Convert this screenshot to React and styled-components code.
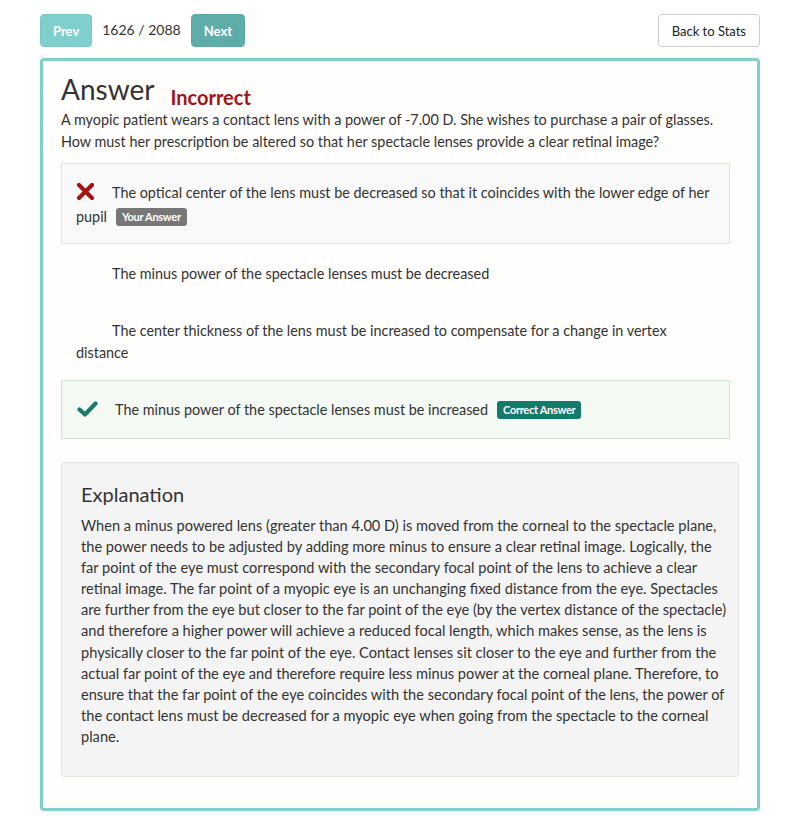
import React from 'react';
import styled, { createGlobalStyle } from 'styled-components';

const GlobalStyle = createGlobalStyle`
  body {
    margin: 0;
    background-color: #fff;
    font-family: 'Lato', 'Open Sans', sans-serif;
    color: #333;
  }
`;

const bodySize = 14.4;

const Page = styled.div`
  width: 720px;
  margin: 0 auto;
  padding-top: 14px;
`;

const TopBar = styled.div`
  display: flex;
  align-items: center;
  gap: 10px;
  margin-bottom: 11px;
`;

const NavButton = styled.button`
  background-color: ${props => props.dark ? '#5fada9' : '#7fcfcc'};
  border: 1px solid ${props => props.dark ? '#5aa8a4' : '#78c8c5'};
  border-radius: 4px;
  color: #fff;
  font-family: 'Lato', sans-serif;
  font-size: 13px;
  font-weight: 700;
  height: 33px;
  padding: 0 12px;
`;

const Counter = styled.span`
  font-size: 14px;
  color: #333;
  margin-top: -2px;
`;

const BackButton = styled.button`
  margin-left: auto;
  background-color: #fff;
  border: 1px solid #ccc;
  border-radius: 4px;
  color: #222;
  font-family: 'Lato', sans-serif;
  font-size: 13px;
  height: 33px;
  padding: 0 13px;
`;

const Card = styled.div`
  border: 3px solid #7fcfcc;
  border-radius: 4px;
  background-color: #fffefc;
  padding: 8px 18px 31px 18px;
`;

const TitleRow = styled.div`
  display: flex;
  align-items: flex-end;
  gap: 16px;
`;

const Title = styled.h1`
  margin: 0;
  font-size: 28px;
  font-weight: 400;
  color: #333;
  line-height: 40px;
`;

const Verdict = styled.span`
  font-size: 20px;
  font-weight: 700;
  color: #a31515;
  line-height: 28px;
  margin-bottom: -2px;
`;

const Question = styled.p`
  margin: 0 0 10px 0;
  font-size: ${bodySize}px;
  line-height: 22px;
  color: #333;
`;

const Options = styled.div`
  margin-right: 9px;
  margin-bottom: 23px;
`;

const Option = styled.div`
  padding: 18px 14px 15px 14px;
  font-size: ${bodySize}px;
  line-height: 22px;
  color: #333;
  border: 1px solid ${props => props.state === 'wrong' ? '#e3e3e3' : props.state === 'right' ? '#cfe6cf' : 'transparent'};
  background-color: ${props => props.state === 'wrong' ? '#f9f9f9' : props.state === 'right' ? '#f4f9f4' : 'transparent'};
`;

const IconSlot = styled.span`
  display: inline-block;
  width: ${props => props.wide ? '38px' : '35px'};
  vertical-align: -2px;
  margin-left: 1px;
`;

const Badge = styled.span`
  display: inline-block;
  margin-left: 9px;
  padding: 3px 6px;
  border-radius: 3px;
  font-size: 11px;
  font-weight: 700;
  line-height: 12px;
  letter-spacing: -0.3px;
  color: #fff;
  background-color: ${props => props.correct ? '#157a6a' : '#777'};
  vertical-align: 1px;
`;

const Explanation = styled.div`
  background-color: #f4f4f4;
  border: 1px solid #e3e3e3;
  border-radius: 4px;
  padding: 16px 6px 19px 19px;
`;

const ExplanationTitle = styled.h3`
  margin: 0 0 6px 0;
  font-size: 20px;
  font-weight: 400;
  color: #333;
  line-height: 30px;
`;

const ExplanationText = styled.p`
  margin: 0 0 10px 0;
  font-size: 14.6px;
  line-height: 21.1px;
  color: #333;
`;

function CrossIcon() {
  return (
    <svg width="17" height="17" viewBox="0 0 17 17">
      <path d="M2 2 L15 15 M15 2 L2 15" stroke="#a31515" strokeWidth="4.2" strokeLinecap="round" />
    </svg>
  );
}

function CheckIcon() {
  return (
    <svg width="21" height="16" viewBox="0 0 21 16">
      <path d="M2.5 8.5 L8 13.5 L18.5 2.5" stroke="#1a7a6a" strokeWidth="4.2" strokeLinecap="round" strokeLinejoin="round" fill="none" />
    </svg>
  );
}

const options = [
  { text: 'The optical center of the lens must be decreased so that it coincides with the lower edge of her pupil', state: 'wrong' },
  { text: 'The minus power of the spectacle lenses must be decreased' },
  { text: 'The center thickness of the lens must be increased to compensate for a change in vertex distance' },
  { text: 'The minus power of the spectacle lenses must be increased', state: 'right' },
];

export default function App() {
  return (
    <>
      <GlobalStyle />
      <Page>
        <TopBar>
          <NavButton>Prev</NavButton>
          <Counter>1626 / 2088</Counter>
          <NavButton dark>Next</NavButton>
          <BackButton>Back to Stats</BackButton>
        </TopBar>
        <Card>
          <TitleRow>
            <Title>Answer</Title>
            <Verdict>Incorrect</Verdict>
          </TitleRow>
          <Question>
            A myopic patient wears a contact lens with a power of -7.00 D. She wishes to purchase a pair of glasses.
            How must her prescription be altered so that her spectacle lenses provide a clear retinal image?
          </Question>
          <Options>
            {options.map((o, i) => (
              <Option key={i} state={o.state}>
                <IconSlot wide={o.state === 'right'}>
                  {o.state === 'wrong' && <CrossIcon />}
                  {o.state === 'right' && <CheckIcon />}
                </IconSlot>
                {o.text}
                {o.state === 'wrong' && <Badge>Your Answer</Badge>}
                {o.state === 'right' && <Badge correct>Correct Answer</Badge>}
              </Option>
            ))}
          </Options>
          <Explanation>
            <ExplanationTitle>Explanation</ExplanationTitle>
            <ExplanationText>
              When a minus powered lens (greater than 4.00 D) is moved from the corneal to the spectacle plane,
              the power needs to be adjusted by adding more minus to ensure a clear retinal image. Logically, the
              far point of the eye must correspond with the secondary focal point of the lens to achieve a clear
              retinal image. The far point of a myopic eye is an unchanging fixed distance from the eye. Spectacles
              are further from the eye but closer to the far point of the eye (by the vertex distance of the spectacle)
              and therefore a higher power will achieve a reduced focal length, which makes sense, as the lens is
              physically closer to the far point of the eye. Contact lenses sit closer to the eye and further from the
              actual far point of the eye and therefore require less minus power at the corneal plane. Therefore, to
              ensure that the far point of the eye coincides with the secondary focal point of the lens, the power of
              the contact lens must be decreased for a myopic eye when going from the spectacle to the corneal
              plane.
            </ExplanationText>
          </Explanation>
        </Card>
      </Page>
    </>
  );
}
